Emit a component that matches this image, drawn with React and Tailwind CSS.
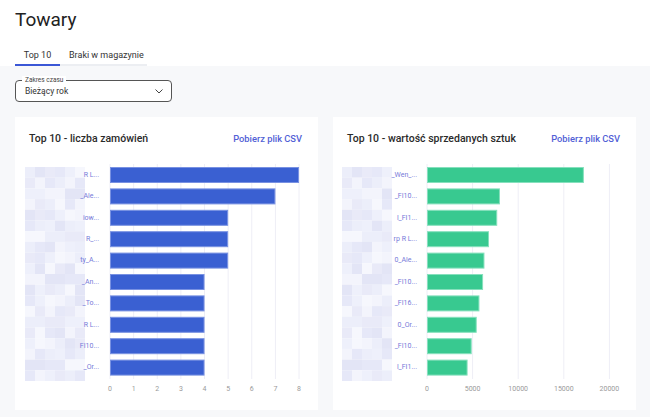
import React from "react";

const leftLabels = ["R L...", "_Ale...", "iow...", "R_...", "ty_A...", "_An...", "_To...", "R L...", "FI10...", "_Or..."];
const leftVals = [8, 7, 5, 5, 5, 4, 4, 4, 4, 4];
const rightLabels = ["_Wen_...", "_FI10...", "l_FI1...", "rp R L...", "0_Ale...", "_FI10...", "_FI16...", "0_Or...", "_FI10...", "l_FI1..."];
const rightVals = [17200, 8000, 7700, 6800, 6300, 6150, 5750, 5450, 4900, 4450];

const mosaicColors = ["#eceefa", "#e6e8f8", "#f3f4fc", "#e9eaf8", "#f6f7fd", "#e3e5f6", "#eef0fb"];

function Mosaic({ x, w }) {
  const cells = [];
  const cols = Math.round(w / 10);
  for (let r = 0; r < 20; r++) {
    for (let c = 0; c < cols; c++) {
      const col = mosaicColors[(r * 3 + c * 5 + ((r * c) % 4)) % mosaicColors.length];
      cells.push(<rect key={r + "-" + c} x={x + c * 10} y={10 + r * 10.7} width={10} height={10.7} fill={col} />);
    }
  }
  return <g>{cells}</g>;
}

function Chart({ labels, vals, x0, scale, ticks, fill, stroke, mosaicX, mosaicW }) {
  const pitch = 21.4;
  return (
    <svg width="303" height="250" className="block">
      <Mosaic x={mosaicX} w={mosaicW} />
      {ticks.map((t) => (
        <line key={"g" + t} x1={x0 + t * scale} x2={x0 + t * scale} y1={7} y2={222} stroke="#eeeef6" strokeWidth="1" />
      ))}
      {vals.map((v, i) => (
        <rect key={"b" + i} x={x0 + 0.5} y={10.5 + i * pitch} width={v * scale - 1} height={15} fill={fill} stroke={stroke} strokeWidth="1" />
      ))}
      {labels.map((l, i) => (
        <text key={"l" + i} x={84} y={18 + i * pitch} textAnchor="end" dominantBaseline="middle" fontSize="7" fill="#767ad9" fontFamily="Roboto, sans-serif">
          {l}
        </text>
      ))}
      {ticks.map((t) => (
        <text key={"t" + t} x={x0 + t * scale} y={232} textAnchor="middle" dominantBaseline="middle" fontSize="7" fill="#9a9a9a" fontFamily="Roboto, sans-serif">
          {t}
        </text>
      ))}
    </svg>
  );
}

function Card({ title, children }) {
  return (
    <div className="bg-white h-[293px] w-[303px]">
      <div className="flex items-center justify-between pl-[14px] pr-[16px] pt-[3px] h-[40px]">
        <span className="text-[10.5px] font-medium text-[#2a2a2a]">{title}</span>
        <span className="text-[9.3px] font-medium text-[#5160d6]">Pobierz plik CSV</span>
      </div>
      {children}
    </div>
  );
}

export default function App() {
  return (
    <div className="w-[650px] h-[417px] overflow-hidden bg-white flex flex-col" style={{ fontFamily: "Roboto, 'Liberation Sans', sans-serif" }}>
      <div className="px-[15px] pt-[7px] h-[44px]">
        <h1 className="text-[19px] leading-[26px] text-[#222]">Towary</h1>
      </div>
      <div className="px-[15px]">
        <div className="flex w-[132px] border-b-[2px] border-[#eceef2] h-[22px]">
          <div className="w-[45px] flex items-start justify-center border-b-[2px] border-[#3b57d6] -mb-[2px] pt-[5px] text-[9px] text-[#333]">Top 10</div>
          <div className="pl-[9px] pt-[5px] text-[9px] text-[#333]">Braki w magazynie</div>
        </div>
      </div>
      <div className="flex-1 bg-[#f7f8fa] px-[15px] pt-[14px]">
        <div className="relative w-[157px] h-[22px] border border-[#555] rounded-[4px] bg-white flex items-center justify-between pl-[9px] pr-[8px]">
          <span className="absolute -top-[5px] left-[6px] bg-white px-[3px] text-[6.5px] leading-[8px] text-[#444]">Zakres czasu</span>
          <span className="text-[8.5px] text-[#333] pt-[1px]">Bieżący rok</span>
          <svg width="8" height="5" viewBox="0 0 8 5"><path d="M0.5 0.5 L4 4 L7.5 0.5" fill="none" stroke="#444" strokeWidth="1" /></svg>
        </div>
        <div className="flex gap-[15px] mt-[15px]">
          <Card title="Top 10 - liczba zamówień">
            <Chart labels={leftLabels} vals={leftVals} x0={95} scale={23.63} ticks={[0, 1, 2, 3, 4, 5, 6, 7, 8]} fill="#3a60d2" stroke="#7891e2" mosaicX={10} mosaicW={55} />
          </Card>
          <Card title="Top 10 - wartość sprzedanych sztuk">
            <Chart labels={rightLabels} vals={rightVals} x0={94} scale={0.00912} ticks={[0, 5000, 10000, 15000, 20000]} fill="#38c990" stroke="#86e0bd" mosaicX={9} mosaicW={50} />
          </Card>
        </div>
      </div>
    </div>
  );
}
